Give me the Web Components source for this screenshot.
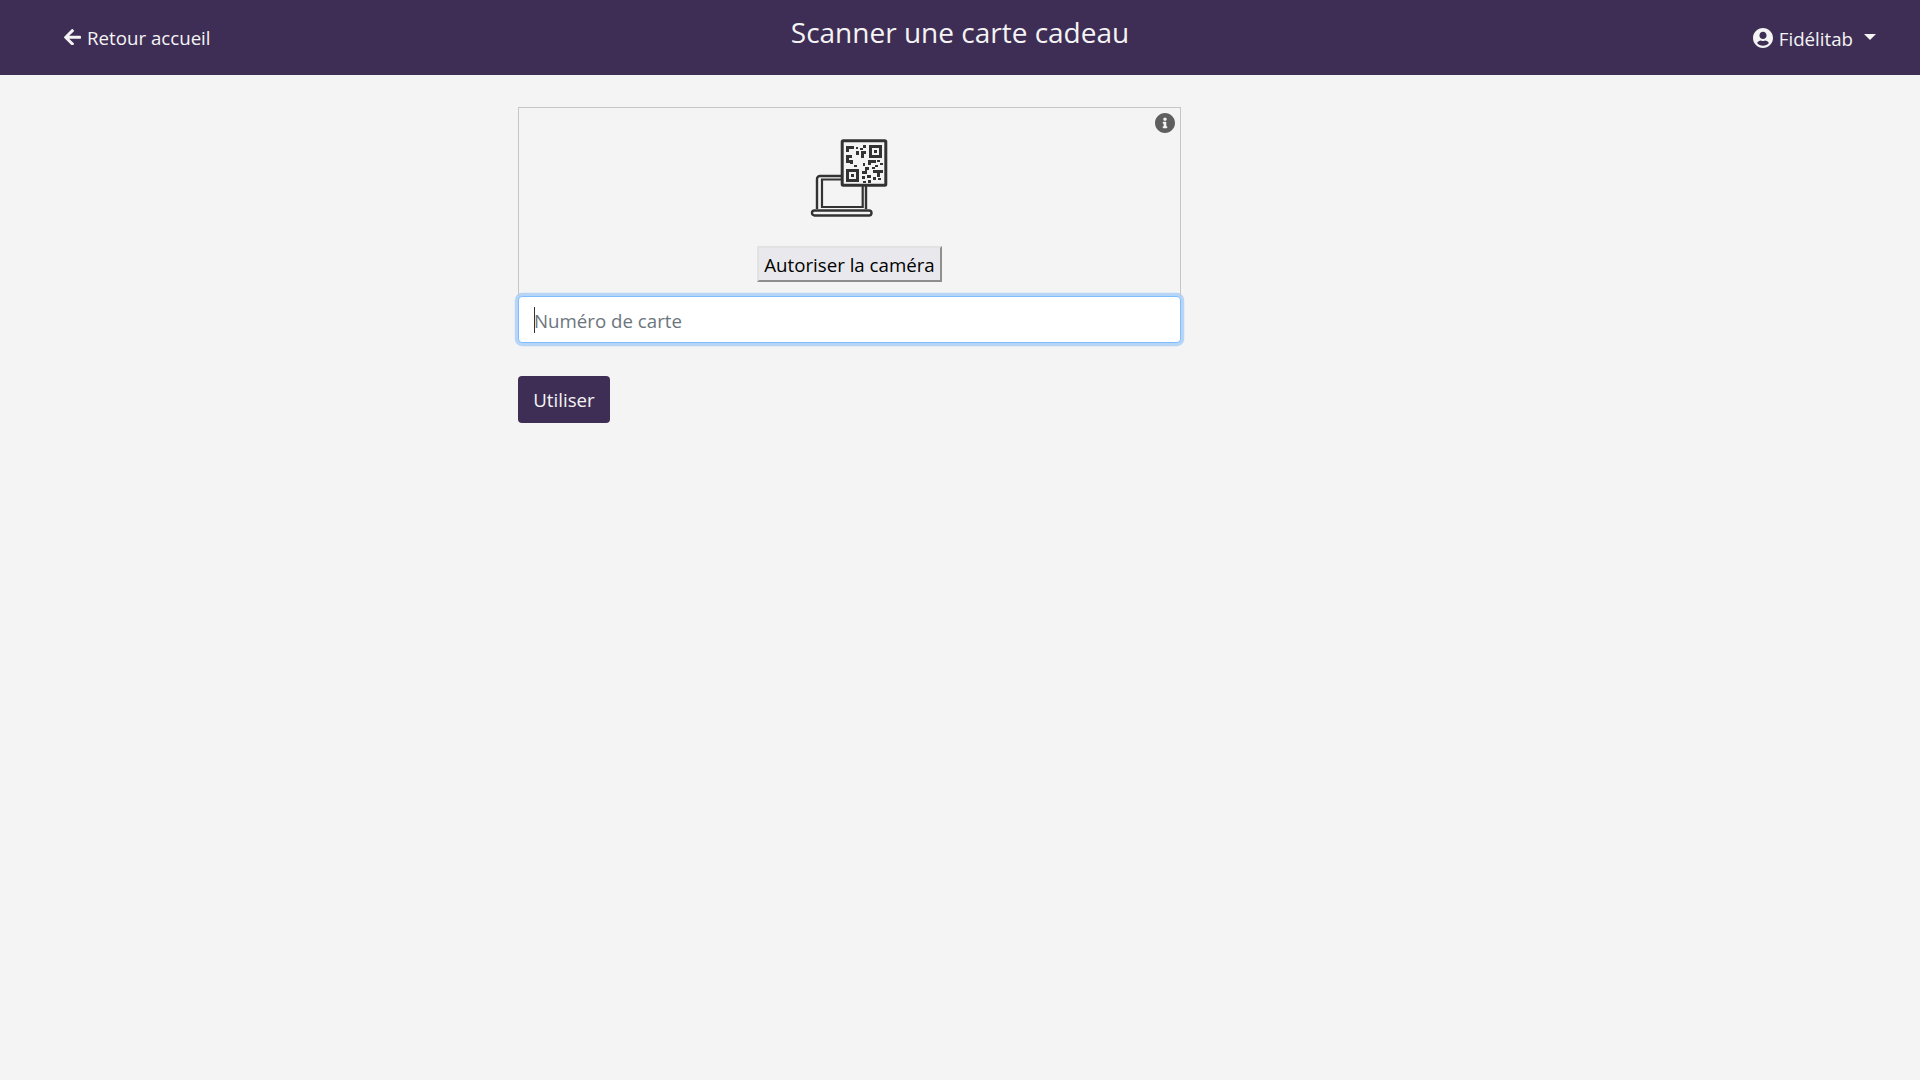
<!DOCTYPE html>
<html lang="fr">
<head>
<meta charset="utf-8">
<title>Scanner une carte cadeau</title>
<style>
  html, body { margin: 0; height: 100%; }
  body { background: #f4f4f4; font-family: "Open Sans", "Noto Sans", sans-serif; }
</style>
</head>
<body>
<app-header heading="Scanner une carte cadeau" user="Fidélitab"></app-header>
<gift-form></gift-form>

<template id="header-tpl">
  <style>
    :host { display: grid; grid-template-columns: 1fr auto 1fr; align-items: center; height: 75px; padding: 0 44px; background: #3e2d54; color: #f4f4f4; }
    .back { display: flex; align-items: center; gap: 6px; margin-left: 19px; font-size: 18.7px; margin-bottom: 1px; }
    .back svg { margin-left: 1px; }
    h1 { margin: 0 0 12px; font-size: 28px; font-weight: 400; }
    .user { justify-self: end; display: flex; align-items: center; font-size: 18.7px; padding-top: 1px; }
    .user svg { margin-right: 6px; }
    .caret { width: 0; height: 0; margin-left: 11px; margin-top: -2px; border-top: 6px solid #f4f4f4; border-left: 6px solid transparent; border-right: 6px solid transparent; }
  </style>
  <div class="back">
    <svg width="17" height="16.600" viewBox="0 37 448 438" fill="#f4f4f4"><path d="M257.500 445.100l-22.200 22.200c-9.400 9.400-24.600 9.400-33.900 0L7 273c-9.400-9.400-9.400-24.600 0-33.900L201.400 44.700c9.400-9.400 24.600-9.400 33.900 0l22.200 22.200c9.500 9.500 9.300 25-.4 34.300L136.600 216H424c13.300 0 24 10.700 24 24v32c0 13.300-10.700 24-24 24H136.600l120.500 114.800c9.800 9.300 10 24.800.4 34.300z"/></svg>
    <span>Retour accueil</span>
  </div>
  <h1></h1>
  <div class="user">
    <svg width="20" height="20" viewBox="0 8 496 496" fill="#f4f4f4"><path d="M248 8C111 8 0 119 0 256s111 248 248 248 248-111 248-248S385 8 248 8zm0 96c48.600 0 88 39.400 88 88s-39.400 88-88 88-88-39.400-88-88 39.400-88 88-88zm0 344c-58.700 0-111.300-26.600-146.500-68.200 18.800-35.400 55.600-59.800 98.500-59.800 2.400 0 4.800.4 7.100 1.100 13 4.200 26.600 6.900 40.900 6.900 14.300 0 28-2.700 40.900-6.900 2.300-.7 4.700-1.100 7.100-1.100 42.900 0 79.700 24.400 98.500 59.800C359.300 421.400 306.700 448 248 448z"/></svg>
    <span class="name"></span>
    <span class="caret"></span>
  </div>
</template>

<template id="qr-tpl">
  <style>
    :host { display: block; width: 78px; height: 80px; margin-right: 1px; }
    svg { display: block; }
  </style>
  <svg width="78" height="80" viewBox="0 0 78 80" fill="none" stroke="#333" stroke-width="3">
    <path d="M32 38H10a3 3 0 0 0-3 3V71M56 48V71" stroke-width="2.400"/>
    <path d="M32 41.500H12V69H52.700V48" stroke-width="2.200"/>
    <rect x="2" y="72.500" width="59.500" height="5" rx="2.500" stroke-width="2.400"/>
    <rect x="32.200" y="2.800" width="43.600" height="44.400" rx="1" fill="#f4f4f4"/>
    <g fill="#333" stroke="none">
      <path d="M36 8h8v3h-5v3h-3zM36 17h6v3h-3v2h4v4h-3v-1h-4zM44 27h3v2h-3z"/>
      <path d="M46 9h2v2h-2zM50 10h3v2h-3zM53 7h3v3h-3zM46 13h3v4h-3zM51 13h5v3h-2v4h-3z"/>
      <path d="M59 7h13v13H59zM62 10v7h7v-7z"/>
      <path d="M64 12h3v3h-3z"/>
      <path d="M36 31h13v13H36zM39 34v7h7v-7z"/>
      <path d="M41 36h3v3h-3z"/>
      <path d="M58 22h8v3h-5v2h-3zM67 22h3v2h-3zM70 25h3v2h-3zM53 25h2v3h-2zM65 27h3v2h-3zM55 29h4v3h-2v4h-5v-3h3z"/>
      <path d="M62 29h3v2h-3zM63 32h10v3h-3v4h-3v-4h-4zM52 38h3v3h-3zM57 37h4v3h-4zM63 39h3v3h-3zM68 40h3v2h-3zM53 43h3v2h-3zM58 42h3v3h-3z"/>
    </g>
  </svg>
</template>

<template id="scanner-tpl">
  <style>
    :host { display: block; box-sizing: border-box; position: relative; height: 189px; border: 1px solid #c6c6c6; border-bottom: 0; padding-top: 30px; }
    .wrap { display: flex; flex-direction: column; align-items: center; }
    .info { position: absolute; top: 5px; right: 5px; }
    button { margin-top: 28px; height: 36px; box-sizing: border-box; padding: 2px 5px 0; background: #e9e9ed; border: 2px solid; border-color: #e2e2e2 #8f8f8f #8f8f8f #e2e2e2; font: 18.700px/1 "Open Sans", "Noto Sans", sans-serif; color: #000; }
  </style>
  <svg class="info" width="20" height="20" viewBox="8 8 496 496" fill="#5f5f5f"><path d="M256 8C119.043 8 8 119.083 8 256c0 137.997 111.043 248 248 248s248-110.003 248-248C504 119.083 392.957 8 256 8zm0 110c23.196 0 42 18.804 42 42s-18.804 42-42 42-42-18.804-42-42 18.804-42 42-42zm56 254c0 6.627-5.373 12-12 12h-88c-6.627 0-12-5.373-12-12v-24c0-6.627 5.373-12 12-12h12v-64h-12c-6.627 0-12-5.373-12-12v-24c0-6.627 5.373-12 12-12h64c6.627 0 12 5.373 12 12v100h12c6.627 0 12 5.373 12 12v24z"/></svg>
  <div class="wrap">
    <qr-laptop></qr-laptop>
    <button type="button"><slot></slot></button>
  </div>
</template>

<template id="form-tpl">
  <style>
    :host { display: block; width: 663px; margin: 32px 0 0 518px; }
    .field { box-sizing: border-box; height: 47px; display: flex; align-items: center; padding: 0 15px; background: #fff; border: 1px solid #80bdff; border-radius: 4px; box-shadow: 0 0 0 3.200px rgba(0,123,255,.25); font-size: 18.700px; color: #6c757d; }
    .cursor { width: 1px; height: 26px; margin-right: -1px; background: #333; }
    .label { padding-top: 2px; }
    .use { display: block; margin-top: 33px; width: 92px; height: 47px; border: 0; padding: 2px 0 0; border-radius: 4px; background: #3e2d54; color: #f4f4f4; font: 18.700px/1 "Open Sans", "Noto Sans", sans-serif; }
  </style>
  <scanner-box>Autoriser la caméra</scanner-box>
  <div class="field"><span class="cursor"></span><span class="label">Numéro de carte</span></div>
  <button class="use" type="button">Utiliser</button>
</template>

<script>
function stamp(el, id) {
  const root = el.attachShadow({ mode: 'open' });
  root.appendChild(document.getElementById(id).content.cloneNode(true));
  return root;
}

class AppHeader extends HTMLElement {
  constructor() {
    super();
    const root = stamp(this, 'header-tpl');
    root.querySelector('h1').textContent = this.getAttribute('heading');
    root.querySelector('.name').textContent = this.getAttribute('user');
  }
}
class QrLaptop extends HTMLElement {
  constructor() { super(); stamp(this, 'qr-tpl'); }
}
class ScannerBox extends HTMLElement {
  constructor() { super(); stamp(this, 'scanner-tpl'); }
}
class GiftForm extends HTMLElement {
  constructor() { super(); stamp(this, 'form-tpl'); }
}
customElements.define('app-header', AppHeader);
customElements.define('qr-laptop', QrLaptop);
customElements.define('scanner-box', ScannerBox);
customElements.define('gift-form', GiftForm);
</script>
</body>
</html>
